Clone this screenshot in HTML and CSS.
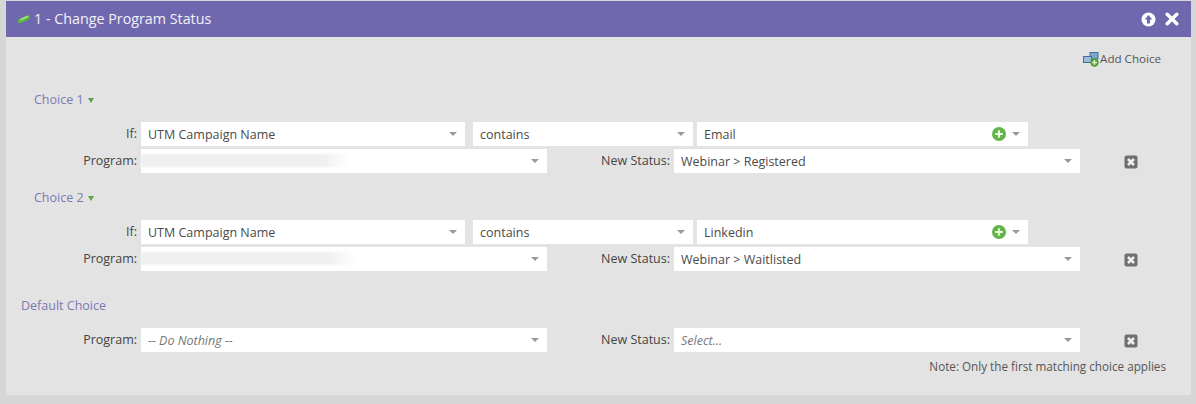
FILE: index.html
```html
<!DOCTYPE html>
<html lang="en">
<head>
<meta charset="utf-8">
<title>Change Program Status</title>
<link rel="stylesheet" href="styles.css">
</head>
<body>
<div class="panel">
  <header class="head">
    <svg class="flow" width="14" height="10" viewBox="0 0 14 10"><path d="M3 7 L10.5 3.5" stroke="#5cb83c" stroke-width="4.5" stroke-linecap="round"/><path d="M4 5.6 L10.5 2.6" stroke="#b4e69a" stroke-width="1.2" stroke-linecap="round"/></svg>
    <span class="title">1 - Change Program Status</span>
    <span class="head-icons">
      <svg width="15" height="15" viewBox="0 0 15 15"><circle cx="7.5" cy="7.5" r="7" fill="#fff"/><path d="M7.5 3 L11.3 7.4 H9 V11.6 H6 V7.4 H3.7 Z" fill="#7068ae"/></svg>
      <svg width="14" height="14" viewBox="0 0 14 14"><path d="M2.2 2.2 L11.8 11.8 M11.8 2.2 L2.2 11.8" stroke="#fff" stroke-width="3.4" stroke-linecap="round"/></svg>
    </span>
  </header>
  <div class="body">
    <div class="toolbar">
      <svg width="17" height="15" viewBox="0 0 17 15"><rect x="7" y="0.5" width="8" height="6.5" fill="#7fa6c9" stroke="#3f6f9c"/><rect x="0.5" y="4.5" width="8" height="6" fill="#9bbbd8" stroke="#3f6f9c"/><circle cx="11.5" cy="10.5" r="4.2" fill="#4f9e3a"/><path d="M11.5 8 V13 M9 10.5 H14" stroke="#d8f2cc" stroke-width="1.4"/></svg>
      <span class="add-text">Add Choice</span>
    </div>

    <div class="choice-label first">Choice 1 <i class="tri"></i></div>
    <div class="row top">
      <label class="lbl">If:</label>
      <div class="sel w-field">UTM Campaign Name<i class="arrow"></i></div>
      <div class="sel w-op">contains<i class="arrow"></i></div>
      <div class="sel w-val">Email
        <svg class="plus" width="14" height="14" viewBox="0 0 14 14"><circle cx="7" cy="7" r="7" fill="#5fb548"/><path d="M7 3.2 V10.8 M3.2 7 H10.8" stroke="#e6f7de" stroke-width="2.2"/></svg>
        <i class="arrow"></i></div>
    </div>
    <div class="row second">
      <label class="lbl">Program:</label>
      <div class="sel w-prog"><span class="blur b1"></span><i class="arrow"></i></div>
      <label class="lbl status">New Status:</label>
      <div class="sel w-prog">Webinar &gt; Registered<i class="arrow"></i></div>
      <svg class="del" width="14" height="14" viewBox="0 0 14 14"><rect x="0.5" y="0.5" width="13" height="13" rx="2" fill="#6f6f6f"/><path d="M4 4 L10 10 M10 4 L4 10" stroke="#eee" stroke-width="2.6"/></svg>
    </div>

    <div class="choice-label next">Choice 2 <i class="tri"></i></div>
    <div class="row top">
      <label class="lbl">If:</label>
      <div class="sel w-field">UTM Campaign Name<i class="arrow"></i></div>
      <div class="sel w-op">contains<i class="arrow"></i></div>
      <div class="sel w-val">Linkedin
        <svg class="plus" width="14" height="14" viewBox="0 0 14 14"><circle cx="7" cy="7" r="7" fill="#5fb548"/><path d="M7 3.2 V10.8 M3.2 7 H10.8" stroke="#e6f7de" stroke-width="2.2"/></svg>
        <i class="arrow"></i></div>
    </div>
    <div class="row second">
      <label class="lbl">Program:</label>
      <div class="sel w-prog"><span class="blur b2"></span><i class="arrow"></i></div>
      <label class="lbl status">New Status:</label>
      <div class="sel w-prog">Webinar &gt; Waitlisted<i class="arrow"></i></div>
      <svg class="del" width="14" height="14" viewBox="0 0 14 14"><rect x="0.5" y="0.5" width="13" height="13" rx="2" fill="#6f6f6f"/><path d="M4 4 L10 10 M10 4 L4 10" stroke="#eee" stroke-width="2.6"/></svg>
    </div>

    <div class="choice-label default">Default Choice</div>
    <div class="row top">
      <label class="lbl">Program:</label>
      <div class="sel w-prog ph">-- Do Nothing --<i class="arrow"></i></div>
      <label class="lbl status">New Status:</label>
      <div class="sel w-prog ph">Select...<i class="arrow"></i></div>
      <svg class="del" width="14" height="14" viewBox="0 0 14 14"><rect x="0.5" y="0.5" width="13" height="13" rx="2" fill="#6f6f6f"/><path d="M4 4 L10 10 M10 4 L4 10" stroke="#eee" stroke-width="2.6"/></svg>
    </div>
    <div class="note">Note: Only the first matching choice applies</div>
  </div>
</div>
</body>
</html>
```
FILE: styles.css
```css
* { box-sizing: border-box; }
html, body { margin: 0; height: 404px; overflow: hidden; }
body {
  background: #d6d6d6;
  font-family: "Open Sans", "Liberation Sans", sans-serif;
  font-size: 12.5px;
  color: #444;
  padding: 1px 5px 0 6px;
}
.panel { height: 394px; display: flex; flex-direction: column; }
.head {
  height: 36px;
  background: #7068ae;
  color: #f2f1f8;
  display: flex;
  align-items: center;
  padding: 0 12px 0 11px;
  font-size: 14.3px;
}
.flow { margin-right: 3px; }
.title { position: relative; bottom: 1px; }
.head-icons { margin-left: auto; display: flex; align-items: center; gap: 9px; }
.body { flex: 1; background: #e3e3e3; }
.toolbar {
  height: 16px;
  margin-top: 14px;
  padding-right: 30px;
  display: flex;
  justify-content: flex-end;
  align-items: center;
  color: #555;
  font-size: 11.6px;
}
.add-text { position: relative; bottom: 1px; }
.choice-label {
  color: #7d78b4;
  height: 18px;
  line-height: 18px;
  padding-left: 28px;
}
.choice-label.first { margin-top: 24px; }
.choice-label.next { margin-top: 16px; }
.choice-label.default { padding-left: 15px; margin-top: 26px; }
.tri {
  display: inline-block;
  width: 0; height: 0;
  border: 3.5px solid transparent;
  border-top: 5px solid #5aa545;
  border-bottom: 0;
  margin-left: 1px;
  vertical-align: 1px;
}
.row { display: flex; align-items: center; height: 24px; }
.row.top { margin-top: 13px; }
.row.second { margin-top: 3px; }
.lbl { width: 131px; text-align: right; margin-right: 4px; flex: none; position: relative; bottom: 1px; }
.lbl.status { width: 123px; margin-right: 4px; }
.sel {
  position: relative;
  background: #fff;
  height: 24px;
  line-height: 25px;
  padding-left: 7px;
  color: #4a4a4a;
  flex: none;
  white-space: nowrap;
}
.w-field { width: 324px; margin-right: 8px; }
.w-op { width: 220px; margin-right: 4px; }
.w-val { width: 331px; }
.w-prog { width: 406px; }
.ph { font-style: italic; color: #777; }
.arrow {
  position: absolute;
  right: 8px;
  top: 10px;
  width: 0; height: 0;
  border: 4px solid transparent;
  border-top: 4px solid #999;
  border-bottom: 0;
}
.plus { position: absolute; right: 22px; top: 5px; }
.del { margin-left: 44px; flex: none; position: relative; top: 1px; }
.blur {
  position: absolute;
  left: 0; top: 5px;
  height: 13px;
  background: linear-gradient(90deg, #f0f0f0, #f0f0f0 88%, #fff);
  filter: blur(1px);
}
.b1 { width: 208px; }
.b2 { width: 214px; }
.note { text-align: right; padding-right: 25px; margin-top: 6px; font-size: 11.7px; color: #555; }
```
